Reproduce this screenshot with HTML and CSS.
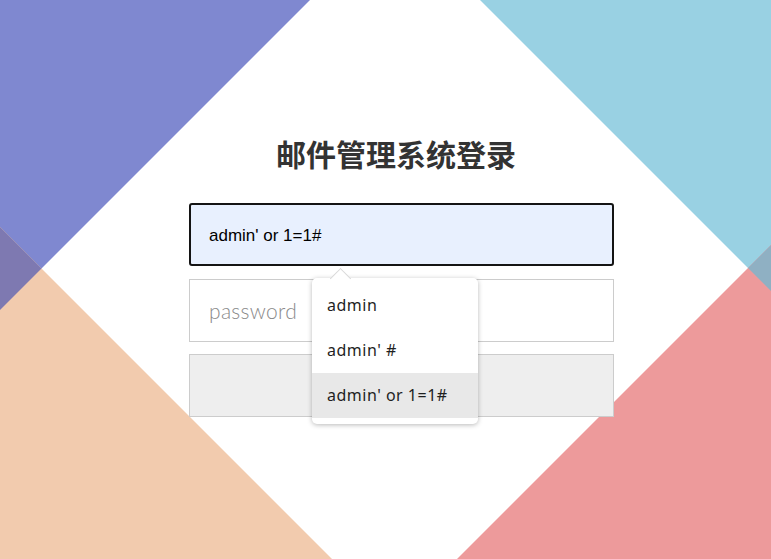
FILE: index.html
```html
<!DOCTYPE html>
<html lang="zh">
<head>
<meta charset="utf-8">
<title>邮件管理系统登录</title>
<link rel="stylesheet" href="styles.css">
</head>
<body>
<svg class="bg" width="771" height="559" viewBox="0 0 771 559" aria-hidden="true">
  <polygon points="0,0 310,0 0,310" fill="#7f88d0"/>
  <polygon points="0,227 332,559 0,559" fill="#f2cbae"/>
  <polygon points="0,227 41.5,268.5 0,310" fill="#7e79b1"/>
  <polygon points="480,0 771,0 771,291" fill="#99d1e3"/>
  <polygon points="771,245 457,559 771,559" fill="#ed9a9b"/>
  <polygon points="771,245 748,268 771,291" fill="#8fb0c3"/>
</svg>
<main class="page">
  <h1 class="title">邮件管理系统登录</h1>
  <form class="login">
    <div class="field field-focus">admin' or 1=1#</div>
    <div class="field field-empty"><span class="placeholder">password</span></div>
    <div class="btn"></div>
    <ul class="suggest">
      <li class="suggest-item">admin</li>
      <li class="suggest-item">admin' #</li>
      <li class="suggest-item active">admin' or 1=1#</li>
    </ul>
  </form>
</main>
</body>
</html>
```
FILE: styles.css
```css
html, body {
  margin: 0;
  padding: 0;
  background: #fff;
  width: 771px;
  height: 559px;
  overflow: hidden;
}
.bg {
  position: absolute;
  left: 0;
  top: 0;
  z-index: 0;
}
.page {
  position: relative;
  z-index: 1;
  display: flex;
  flex-direction: column;
  align-items: center;
  padding-top: 133px;
  padding-left: 32px;
}
.title {
  margin: 0 0 30px;
  font-family: "Noto Sans CJK SC", sans-serif;
  font-weight: 700;
  font-size: 30px;
  line-height: 40px;
  color: #333;
  padding-right: 11px;
}
.login {
  position: relative;
  width: 425px;
  display: flex;
  flex-direction: column;
  gap: 13px;
}
.field, .btn {
  box-sizing: border-box;
  height: 63px;
  border: 1px solid #ccc;
  background: #fff;
  display: flex;
  align-items: center;
  padding-left: 19px;
}
.field-focus {
  border: 2px solid #141414;
  border-radius: 3px;
  background: #e8f0fe;
  font-family: "Liberation Sans", Arial, sans-serif;
  font-size: 17px;
  color: #000;
  padding-left: 18px;
  padding-top: 2px;
}
.placeholder {
  font-family: Lato, sans-serif;
  font-weight: 300;
  font-size: 21px;
  color: #8a8a8a;
  letter-spacing: 0.3px;
}
.btn {
  margin-top: -1px;
  background: #eee;
}
.suggest {
  position: absolute;
  left: 123px;
  top: 75px;
  width: 166px;
  margin: 0;
  padding: 5px 0 6px;
  list-style: none;
  background: #fff;
  border-radius: 5px;
  box-shadow: 0 1px 5px rgba(0,0,0,0.28);
  box-sizing: border-box;
}
.suggest::before {
  content: "";
  position: absolute;
  left: 21px;
  top: -7px;
  width: 14px;
  height: 14px;
  background: #fff;
  border-top: 1px solid #d8d8d8;
  border-left: 1px solid #d8d8d8;
  transform: rotate(45deg);
}
.suggest-item {
  position: relative;
  height: 45px;
  line-height: 45px;
  padding-left: 15px;
  font-family: "Noto Sans", sans-serif;
  font-size: 16px;
  letter-spacing: 0.5px;
  color: #1f1f1f;
}
.suggest-item.active {
  background: #e8e8e8;
}
```
